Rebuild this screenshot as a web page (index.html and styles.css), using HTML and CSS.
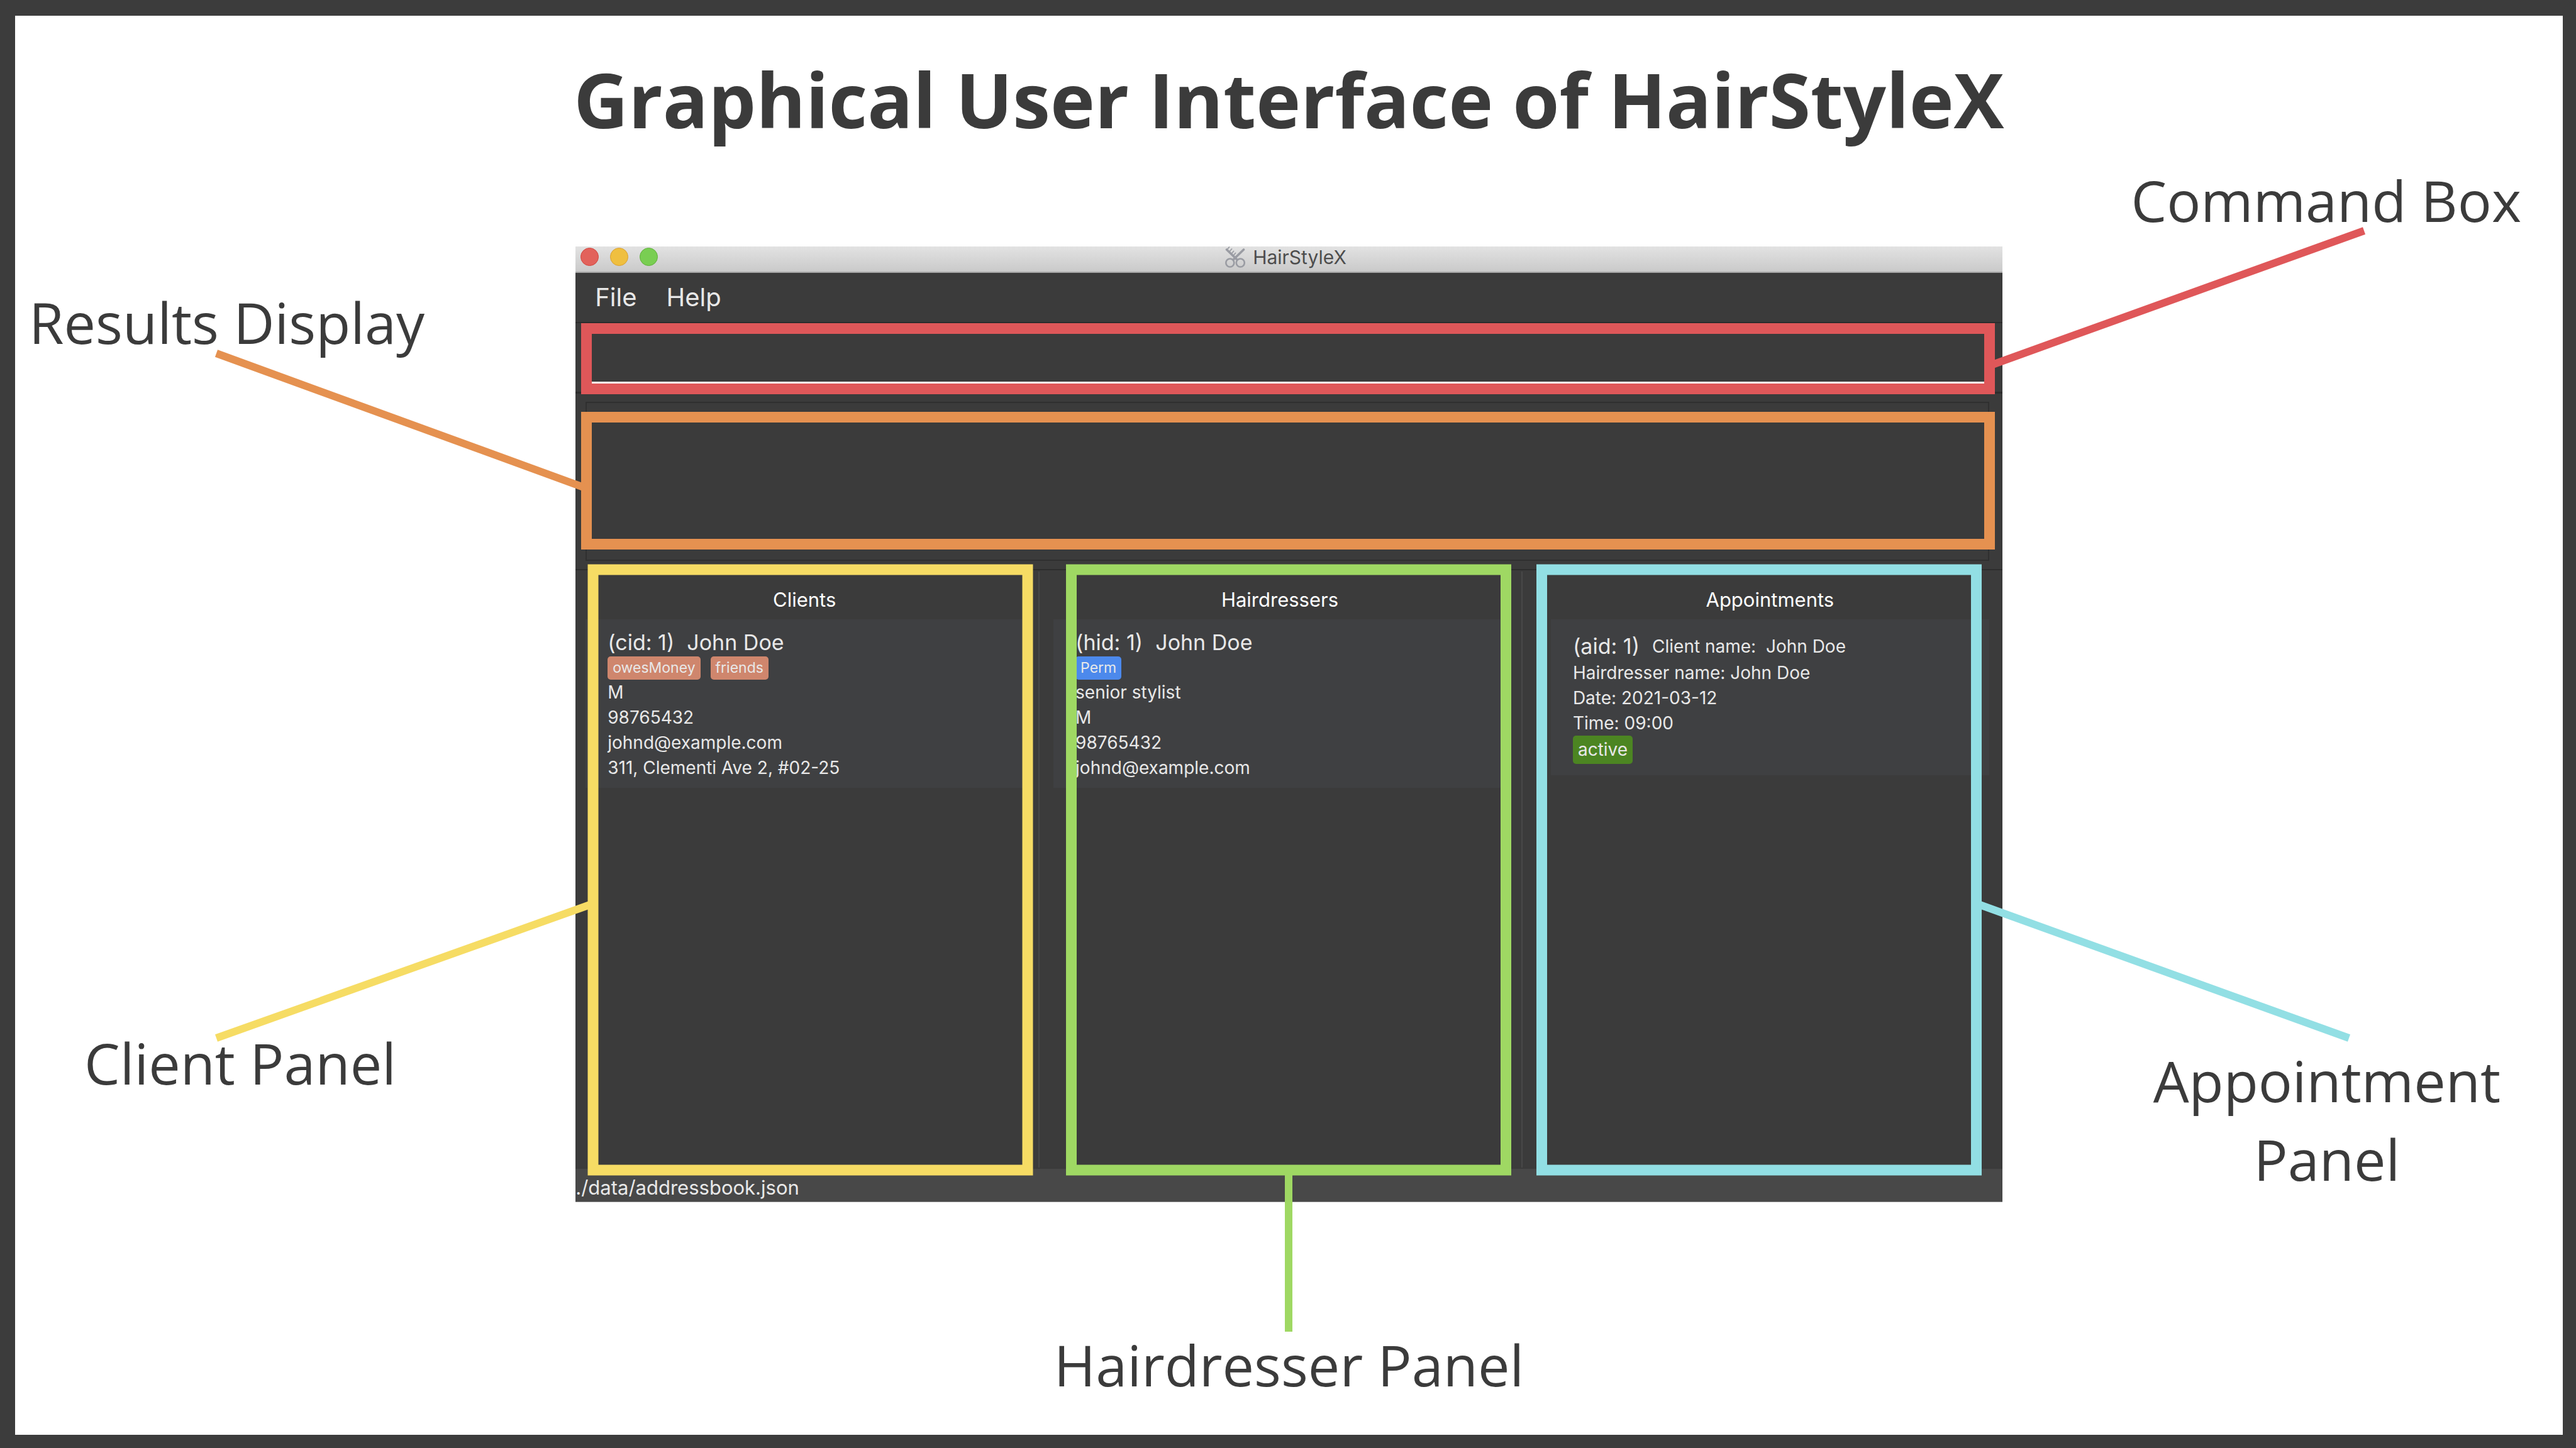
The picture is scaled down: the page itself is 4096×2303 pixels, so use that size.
FILE: index.html
```html
<!DOCTYPE html>
<html lang="en">
<head>
<meta charset="utf-8">
<title>Graphical User Interface of HairStyleX</title>
<link rel="stylesheet" href="styles.css">
</head>
<body>
<main class="slide">
  <h1 class="title">Graphical User Interface of HairStyleX</h1>

  <section class="window">
    <header class="titlebar">
      <div class="lights">
        <button class="light light-close" aria-label="Close"></button>
        <button class="light light-minimise" aria-label="Minimise"></button>
        <button class="light light-zoom" aria-label="Zoom"></button>
      </div>
      <div class="app-name">
        <svg class="app-icon" viewBox="0 0 32 34" aria-hidden="true">
          <g fill="none" stroke="#9a9ca3" stroke-linecap="round">
            <circle cx="7.8" cy="26" r="6.500" stroke-width="2.6"/>
            <circle cx="24.300" cy="26" r="6.500" stroke-width="2.6"/>
            <path d="M13 21L29.5 5" stroke-width="3.6"/>
            <path d="M19 21L2.500 5" stroke-width="3.6"/>
            <path d="M3.500 4.500L6.500 1M7 8L10.500 4M10.500 11L13.500 7.500M13.500 14L16.500 10.500" stroke-width="1.8"/>
          </g>
        </svg>
        <span>HairStyleX</span>
      </div>
    </header>
    <nav class="menubar">
      <button class="menu">File</button>
      <button class="menu">Help</button>
    </nav>
    <div class="command-area">
      <input class="command-box" type="text" aria-label="Command Box">
    </div>
    <div class="result-area">
      <div class="result-frame">
        <textarea class="result-box" aria-label="Results Display" readonly></textarea>
      </div>
    </div>
    <div class="panels">
      <section class="panel">
        <h2 class="panel-title">Clients</h2>
        <article class="card">
          <div class="headline"><span>(cid: 1)</span><span>John Doe</span></div>
          <div class="tags"><span class="tag">owesMoney</span><span class="tag">friends</span></div>
          <p>M</p>
          <p>98765432</p>
          <p>johnd@example.com</p>
          <p>311, Clementi Ave 2, #02-25</p>
        </article>
      </section>
      <section class="panel panel-middle">
        <h2 class="panel-title">Hairdressers</h2>
        <article class="card">
          <div class="headline"><span>(hid: 1)</span><span>John Doe</span></div>
          <div class="tags"><span class="tag tag-skill">Perm</span></div>
          <p>senior stylist</p>
          <p>M</p>
          <p>98765432</p>
          <p>johnd@example.com</p>
        </article>
      </section>
      <section class="panel panel-last">
        <h2 class="panel-title">Appointments</h2>
        <article class="card card-appointment">
          <div class="headline"><span>(aid: 1)</span><span class="field">Client name:&nbsp; John Doe</span></div>
          <p>Hairdresser name: John Doe</p>
          <p>Date: 2021-03-12</p>
          <p>Time: 09:00</p>
          <div class="tag tag-status">active</div>
        </article>
      </section>
    </div>
    <footer class="statusbar">./data/addressbook.json</footer>
  </section>

  <svg class="callouts" viewBox="0 0 4096 2303" aria-hidden="true">
    <g fill="none" stroke-width="17">
      <rect x="932.5" y="522.5" width="2231" height="96" stroke="#df5759"/>
      <rect x="932.5" y="663.5" width="2231" height="202" stroke="#e59150"/>
      <rect x="943" y="906" width="691" height="955" stroke="#f6dc64"/>
      <rect x="1703.500" y="906" width="691" height="955" stroke="#9fd863"/>
      <rect x="2451.500" y="906" width="691" height="955" stroke="#92dfe4"/>
    </g>
    <g fill="none" stroke-width="12">
      <path d="M3168 580L3759 367" stroke="#df5759"/>
      <path d="M344 562L928 775" stroke="#e59150"/>
      <path d="M344 1651L938 1439" stroke="#f6dc64"/>
      <path d="M2049 1866V2118" stroke="#9fd863"/>
      <path d="M3148 1439L3735 1651" stroke="#92dfe4"/>
    </g>
  </svg>

  <p class="label label-results">Results Display</p>
  <p class="label label-command">Command Box</p>
  <p class="label label-client">Client Panel</p>
  <p class="label label-hairdresser">Hairdresser Panel</p>
  <p class="label label-appointment">Appointment<br>Panel</p>
</main>
</body>
</html>
```
FILE: styles.css
```css
* {
  box-sizing: border-box;
}

body,
h1,
h2,
p {
  margin: 0;
}

body {
  background: #fff;
  color: #3b3b3b;
  font-family: "Open Sans", "Noto Sans", sans-serif;
}

button,
input,
textarea {
  margin: 0;
  padding: 0;
  border: 0;
  border-radius: 0;
  background: none;
  color: inherit;
  font: inherit;
}

.slide {
  position: relative;
  display: flex;
  flex-direction: column;
  align-items: center;
  min-height: 100vh;
  padding: 50px 0 0;
  border: solid #3c3c3c;
  border-width: 25px 21px 21px 24px;
}

.title {
  margin-bottom: 152px;
  font-size: 120px;
  line-height: 165px;
  font-weight: 700;
  white-space: nowrap;
}

/* Application window */
.window {
  display: flex;
  flex-direction: column;
  width: 56%;
  background: #3b3b3b;
  color: #e8e8e8;
  font-family: Inter, sans-serif;
  font-size: 28px;
  line-height: 40px;
}

.titlebar {
  display: grid;
  grid-template-columns: 1fr auto 1fr;
  height: 42px;
  padding: 0 18px 0 8px;
  border-bottom: 2px solid #a8a8a8;
  background: linear-gradient(#e2e2e2, #cacaca);
}

.lights {
  display: flex;
  gap: 18px;
  padding-top: 2px;
}

.light {
  width: 29px;
  height: 29px;
  border: 1px solid #d2473f;
  border-radius: 50%;
  background: #e2625b;
}

.light-minimise {
  border-color: #d9a032;
  background: #efbf40;
}

.light-zoom {
  border-color: #5fb03b;
  background: #79ce52;
}

.app-name {
  display: flex;
  gap: 12px;
  color: #4d4d4d;
  font-size: 30px;
  line-height: 34px;
}

.app-icon {
  width: 32px;
  height: 34px;
}

.menubar {
  display: flex;
  gap: 47px;
  height: 80px;
  padding-left: 31px;
  border-bottom: 2px solid #2d2d2d;
}

.menu {
  font-size: 40px;
  line-height: 78px;
}

.command-area {
  height: 112px;
  padding: 16px 20px 0;
  border-bottom: 3px solid #2d2d2d;
}

.command-box {
  display: block;
  width: 100%;
  height: 80px;
  border-bottom: 3px solid #fff;
}

.result-area {
  height: 281px;
  padding: 13px 21px 0 16px;
  border-bottom: 2px solid #2d2d2d;
}

.result-frame {
  height: 253px;
  padding: 20px;
  border: 2px solid #2f2f2f;
}

.result-box {
  display: block;
  width: 100%;
  height: 100%;
  resize: none;
}

.panels {
  display: grid;
  grid-template-columns: 722fr 768fr 742fr;
  height: 952px;
  padding: 2px 21px 2px 16px;
}

.panel {
  padding: 25px 24px 0 0;
  border-right: 2px solid #484848;
}

.panel-middle {
  padding-left: 22px;
}

.panel-last {
  padding: 25px 0 0 45px;
  border-right: 0;
}

.panel-title {
  margin-bottom: 11px;
  color: #fff;
  font-size: 31px;
  line-height: 40px;
  font-weight: 400;
  text-align: center;
}

.card {
  padding: 17px 0 12px 35px;
  background: #3f4042;
}

.headline {
  display: flex;
  gap: 20px;
  height: 42px;
  font-size: 34px;
}

.tags {
  display: flex;
  gap: 16px;
}

.tag {
  height: 37px;
  padding: 0 8px;
  border-radius: 5px;
  background: #cf866d;
  font-size: 23px;
  line-height: 37px;
}

.tag-skill {
  background: #4c89ec;
}

.card-appointment {
  padding: 23px 0 18px 35px;
}

.field {
  font-size: 28px;
}

.tag-status {
  width: fit-content;
  height: 45px;
  background: #4c8522;
  font-size: 28px;
  line-height: 45px;
}

.statusbar {
  height: 53px;
  border-bottom: 1px solid #8a8a8a;
  background: #484848;
  font-size: 31px;
  line-height: 60px;
}

/* Annotations laid over the window */
.callouts {
  position: absolute;
  top: -25px;
  left: -24px;
  width: calc(100% + 45px);
}

.label {
  position: absolute;
  font-size: 90px;
  line-height: 125px;
  text-align: center;
  white-space: nowrap;
}

.label-results {
  top: 425px;
  left: 22px;
}

.label-command {
  top: 231px;
  right: 66px;
}

.label-client {
  top: 1603px;
  left: 110px;
}

.label-hairdresser {
  top: 2083px;
  left: 0;
  right: 0;
}

.label-appointment {
  top: 1631px;
  right: 99px;
}
```
